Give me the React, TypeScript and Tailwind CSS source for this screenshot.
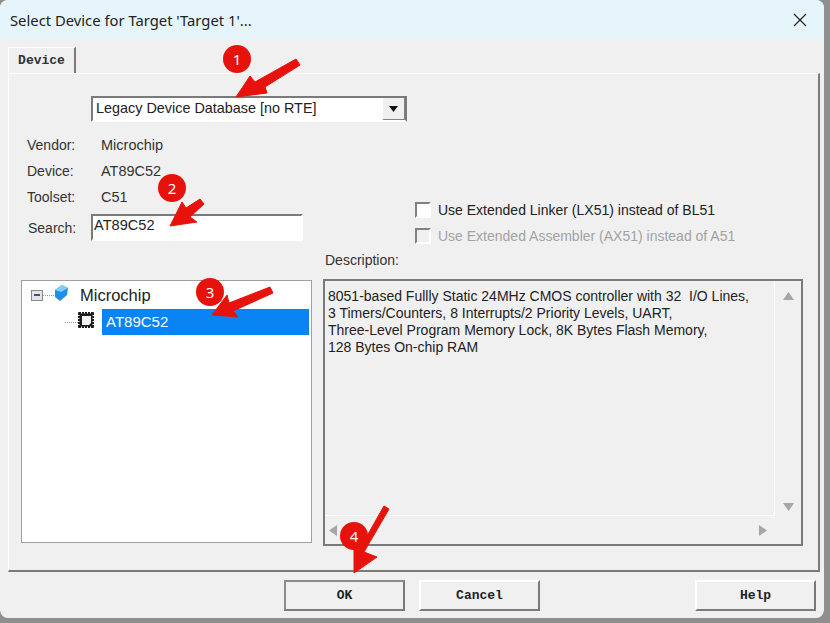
const ui = "font-['Liberation_Sans',sans-serif]";
const mono = "font-['Liberation_Mono',monospace]";

function Badge({ n, className }: { n: number; className: string }) {
  return (
    <div
      className={`absolute flex items-center justify-center rounded-full bg-[#e8120c] text-white text-[15px] font-['Noto_Sans',sans-serif] w-[28px] h-[28px] ${className}`}
    >
      {n}
    </div>
  );
}

function Arrows() {
  return (
    <svg className="absolute inset-0 pointer-events-none" width="830" height="623" viewBox="0 0 830 623">
      <g fill="#e8120c" stroke="#e8120c" strokeWidth="1" strokeLinejoin="round">
        <path d="M296 59 L300 65 L265 87 L267 93 L236 97 L250 76 L255 82 Z" />
        <path d="M200 199 L204 204 L190 217 L197 222 L170 226 L182 202 L186 208 Z" />
        <path d="M270 287 L273 293 L233 311 L238 317 L212 315 L227 295 L229 303 Z" />
        <path d="M384 506 L389 509 L364 552 L377 557 L354 573 L354 548 L359 550 Z" />
      </g>
    </svg>
  );
}

function Info({ label, value }: { label: string; value: string }) {
  return (
    <div className="flex h-[26px] pt-px items-center text-[14px] text-[#333]">
      <span className="w-[74px]">{label}</span>
      <span className="text-[14.5px]">{value}</span>
    </div>
  );
}

function Check({ label, disabled }: { label: string; disabled?: boolean }) {
  return (
    <div className={`flex items-center gap-[7px] text-[14px] h-[26px] ${disabled ? "text-[#a3a3a3]" : "text-[#222]"}`}>
      <div
        className={`w-[16px] h-[16px] border-2 border-t-[#808080] border-l-[#808080] border-r-white border-b-white ${disabled ? "bg-[#f0f0f0]" : "bg-white"}`}
      />
      <span>{label}</span>
    </div>
  );
}

function Triangle({ dir }: { dir: "up" | "down" | "left" | "right" }) {
  const pts = { up: "5.5,1 11,9 0,9", down: "0,1 11,1 5.5,9", left: "9,0 9,11 1,5.5", right: "1,0 1,11 9,5.5" }[dir];
  return (
    <svg width="11" height="11" viewBox="0 0 11 11">
      <polygon points={pts} fill="#a6a6a6" />
    </svg>
  );
}

function DlgButton({ label, primary }: { label: string; primary?: boolean }) {
  return (
    <div
      className={`w-[121px] h-[31px] flex items-center justify-center text-[13px] font-bold text-[#222] ${mono} border-2 border-r-[#7a7a7a] border-b-[#7a7a7a] ${
        primary ? "border-t-[#8c8c8c] border-l-[#8c8c8c]" : "border-t-white border-l-white"
      }`}
    >
      {label}
    </div>
  );
}

export default function App() {
  return (
    <div className={`relative w-[830px] h-[623px] overflow-hidden bg-[#8f8f8f] ${ui}`}>
      <div className="w-[824px] h-[618px] rounded-[8px] overflow-hidden bg-[#f0f0f0] flex flex-col">
        {/* title bar */}
        <div className="h-[40px] shrink-0 bg-[#e6f5fc] flex items-center justify-between pl-[10px] pr-[17px]">
          <span className="text-[14.8px] text-[#222] font-['Noto_Sans',sans-serif]">Select Device for Target 'Target 1'...</span>
          <svg width="14" height="14" viewBox="0 0 14 14">
            <path d="M1 1 L13 13 M13 1 L1 13" stroke="#222" strokeWidth="1.2" />
          </svg>
        </div>

        <div className="flex-1 flex flex-col pl-[8px] pr-[4px]">
          {/* tab */}
          <div className="flex h-[26px] mt-[7px] shrink-0">
            <div
              className={`w-[68px] flex items-center justify-center border-t border-l border-white border-r-2 border-r-[#7a7a7a] text-[13px] font-bold text-[#333] ${mono}`}
            >
              Device
            </div>
          </div>

          {/* tab page */}
          <div className="h-[499px] shrink-0 border-t border-l border-t-white border-l-white border-r-2 border-b-2 border-r-[#7a7a7a] border-b-[#7a7a7a] pt-[22px] pl-[12px] pr-[15px] flex flex-col">
            {/* combo */}
            <div className="ml-[70px] w-[316px] h-[26px] border-2 border-t-[#7a7a7a] border-l-[#7a7a7a] border-r-[#7a7a7a] border-b-white bg-white flex items-center justify-between pl-[3px] text-[14.4px] text-[#222]">
              <span>Legacy Device Database [no RTE]</span>
              <div className="w-[22px] h-full bg-[#f0f0f0] border-r border-b border-[#808080] flex items-center justify-center">
                <svg width="9" height="6" viewBox="0 0 9 6">
                  <polygon points="0,0 9,0 4.5,6" fill="#111" />
                </svg>
              </div>
            </div>

            <div className="flex mt-[10px]">
              <div className="flex flex-col ml-[6px] w-[388px]">
                <Info label="Vendor:" value="Microchip" />
                <Info label="Device:" value="AT89C52" />
                <Info label="Toolset:" value="C51" />
                <div className="flex items-center mt-[4px] text-[14px] text-[#333]">
                  <span className="w-[63px] ml-px pt-[2px]">Search:</span>
                  <div className="w-[212px] h-[27px] border-2 border-t-[#7a7a7a] border-l-[#7a7a7a] border-r-white border-b-white bg-white pl-[1px] pb-[3px] flex items-center text-[14.6px] text-[#222]">
                    AT89C52
                  </div>
                </div>
              </div>
              <div className="flex flex-col pt-[65px]">
                <Check label="Use Extended Linker (LX51) instead of BL51" />
                <Check label="Use Extended Assembler (AX51) instead of A51" disabled />
              </div>
            </div>

            <div className="flex flex-1 mt-[11px]">
              {/* device tree */}
              <div className="w-[291px] h-[263px] mt-[20px] border border-[#a0a0a0] bg-white pt-[1px] pl-[9px] pr-[2px]">
                <div className="flex items-center h-[26px] text-[16.5px] text-[#222]">
                  <div className="w-[12px] h-[11px] border border-[#888] bg-[#e4e4e4] flex items-center justify-center">
                    <div className="w-[6px] h-[2px] bg-[#33558f]" />
                  </div>
                  <div className="w-[11px] border-t border-dotted border-[#999]" />
                  <svg width="14" height="16" viewBox="0 0 14 16" className="mb-[5px]">
                    <polygon points="8,0 14,3 13,10 6,16 1,12 1,5" fill="#1f8fe8" />
                    <polygon points="8,0 14,3 7,7 1,5" fill="#7fd0fa" />
                  </svg>
                  <span className="ml-[12px]">Microchip</span>
                </div>
                <div className="flex items-center h-[26px] mt-px">
                  <div className="w-[13px] ml-[34px] border-t border-dotted border-[#999]" />
                  <svg width="16" height="16" viewBox="0 0 16 16" className="mb-[5px]">
                    <rect x="0" y="0" width="16" height="16" rx="1" fill="#1c1c1c" />
                    <path d="M4 4h9v7l-2 2H4z" fill="#f4f4f4" />
                    <path d="M3.5 0v1.5M6.5 0v1.5M9.5 0v1.5M12.5 0v1.5M3.5 14.5v1.5M6.5 14.5v1.5M9.5 14.5v1.5M12.5 14.5v1.5M0 3.5h1.5M0 6.5h1.5M0 9.5h1.5M0 12.5h1.5M14.5 3.5h1.5M14.5 6.5h1.5M14.5 9.5h1.5M14.5 12.5h1.5" stroke="#fff" strokeWidth="1" />
                  </svg>
                  <div className="ml-[8px] flex-1 h-full bg-[#0a84f5] text-white text-[15px] flex items-center pl-[4px]">
                    AT89C52
                  </div>
                </div>
              </div>

              {/* description */}
              <div className="ml-[13px] flex flex-col flex-1">
                <div className="h-[25px] -mt-[10px] text-[14px] text-[#333] flex items-start">Description:</div>
                <div className="relative -ml-[2px] h-[267px] border-2 border-[#7a7a7a] mt-[4px] flex flex-col">
                  <div className="flex flex-1">
                    <div className="flex-1 border-r border-b border-white pl-[3px] pt-[7px] text-[14px] leading-[17px] text-[#222] whitespace-pre">
                      {"8051-based Fullly Static 24MHz CMOS controller with 32  I/O Lines,\n3 Timers/Counters, 8 Interrupts/2 Priority Levels, UART,\nThree-Level Program Memory Lock, 8K Bytes Flash Memory,\n128 Bytes On-chip RAM"}
                    </div>
                    <div className="w-[26px] flex flex-col items-center justify-between pt-[10px] pb-[3px]">
                      <Triangle dir="up" />
                      <Triangle dir="down" />
                    </div>
                  </div>
                  <div className="h-[28px] flex items-center justify-between pl-[3px] pr-[32px]">
                    <Triangle dir="left" />
                    <Triangle dir="right" />
                  </div>
                </div>
              </div>
            </div>
          </div>

          {/* buttons */}
          <div className="flex mt-[8px] ml-[276px] pr-[4px]">
            <DlgButton label="OK" primary />
            <div className="ml-[14px]">
              <DlgButton label="Cancel" />
            </div>
            <div className="ml-auto">
              <DlgButton label="Help" />
            </div>
          </div>
        </div>
      </div>

      <Arrows />
      <Badge n={1} className="left-[223px] top-[45px]" />
      <Badge n={2} className="left-[158px] top-[174px]" />
      <Badge n={3} className="left-[196px] top-[278px]" />
      <Badge n={4} className="left-[340px] top-[522px]" />
    </div>
  );
}
